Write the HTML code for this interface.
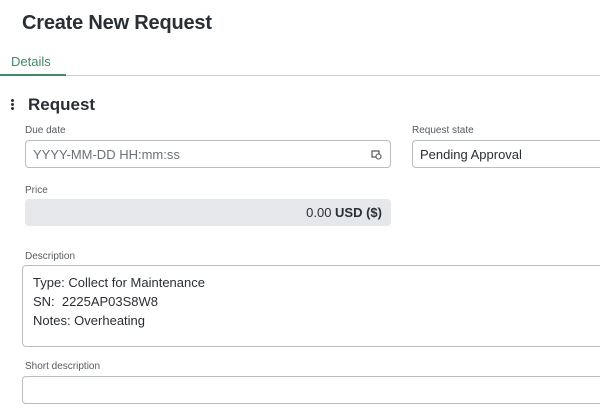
<!DOCTYPE html>
<html><head><meta charset="utf-8"><style>
*{margin:0;padding:0;box-sizing:border-box}
body{width:600px;height:417px;overflow:hidden;background:#fff;font-family:"Liberation Sans",sans-serif;color:#2e3338;position:relative}
.a{position:absolute}
.lbl{font-size:10px;color:#555b61}
.box{border:1.5px solid #b9bdc2;border-radius:4px;background:#fff}
</style></head><body>
<div class="a" style="left:22px;top:12px;font-size:20px;font-weight:bold;color:#2a2f35;letter-spacing:-0.2px">Create New Request</div>
<div class="a" style="left:11px;top:54px;font-size:13px;color:#3f8a65">Details</div>
<div class="a" style="left:0;top:75px;width:600px;height:1px;background:#c9ccd0"></div>
<div class="a" style="left:0;top:74px;width:66px;height:2px;background:#3f8a65"></div>
<div class="a" style="left:11px;top:99px;width:3px;height:3px;border-radius:50%;background:#333;box-shadow:0 4px 0 #333,0 8px 0 #333"></div>
<div class="a" style="left:28px;top:95px;font-size:17px;font-weight:bold;color:#2a2f35">Request</div>
<div class="a lbl" style="left:25px;top:125px">Due date</div>
<div class="a box" style="left:25px;top:140px;width:366px;height:28px"></div>
<div class="a" style="left:33px;top:147px;font-size:13px;color:#6a7076">YYYY-MM-DD HH:mm:ss</div>
<svg class="a" style="left:371px;top:149px" width="11" height="11" viewBox="0 0 11 11"><rect x="1" y="2" width="7" height="6" fill="none" stroke="#555" stroke-width="1.2"/><circle cx="7.5" cy="7.5" r="2.5" fill="#fff" stroke="#555" stroke-width="1.1"/></svg>
<div class="a lbl" style="left:412px;top:125px">Request state</div>
<div class="a box" style="left:412px;top:140px;width:200px;height:28px"></div>
<div class="a" style="left:420px;top:147px;font-size:13px;color:#2a2f35">Pending Approval</div>
<div class="a lbl" style="left:25px;top:185px">Price</div>
<div class="a" style="left:25px;top:199px;width:366px;height:27px;background:#e6e7ea;border-radius:4px"></div>
<div class="a" style="left:25px;top:205px;width:357px;text-align:right;font-size:13px;color:#2a2f35">0.00 <b>USD ($)</b></div>
<div class="a lbl" style="left:25px;top:251px">Description</div>
<div class="a box" style="left:22px;top:265px;width:600px;height:82px"></div>
<div class="a" style="left:33px;top:273px;font-size:13px;line-height:19px;color:#2a2f35">Type: Collect for Maintenance<br>SN:&nbsp; 2225AP03S8W8<br>Notes: Overheating</div>
<div class="a lbl" style="left:25px;top:361px">Short description</div>
<div class="a box" style="left:22px;top:376px;width:600px;height:28px"></div>
</body></html>
